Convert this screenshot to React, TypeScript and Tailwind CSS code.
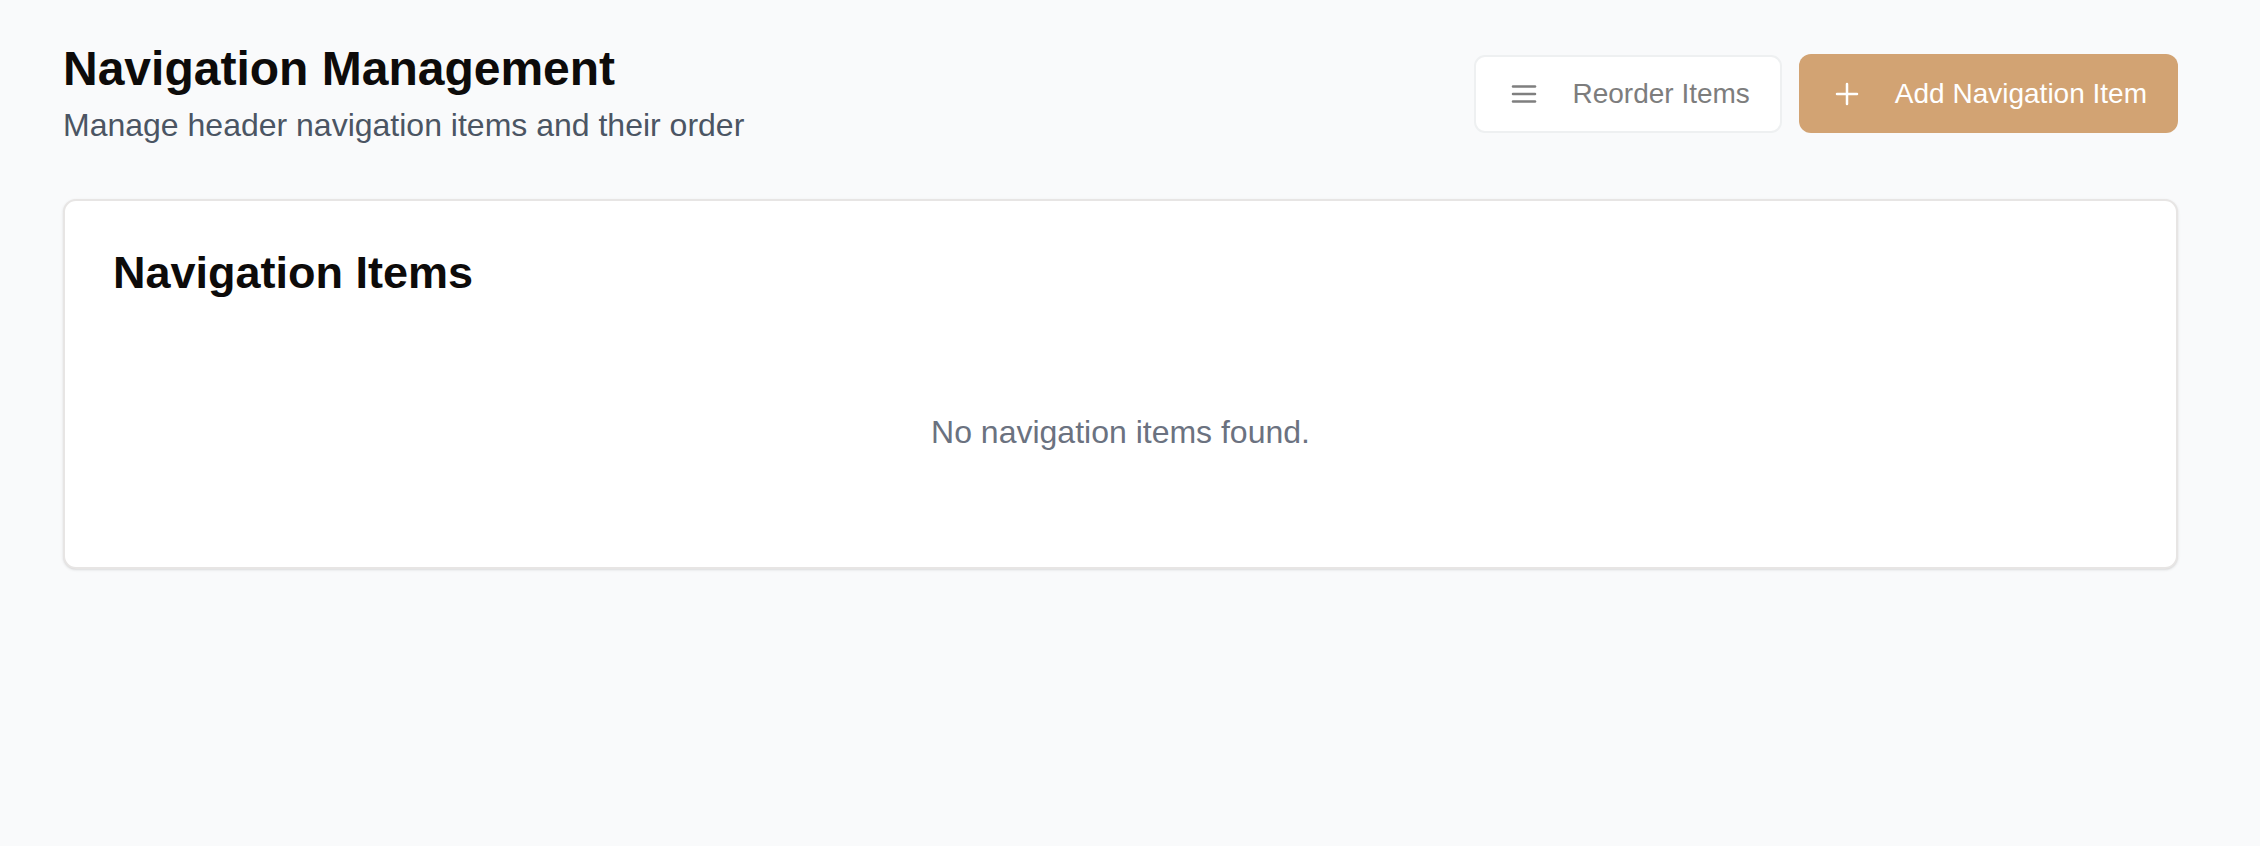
import React from 'react';

export default function App() {
  return (
    <div
      className="min-h-screen bg-[#f9fafb] pt-[40px] pl-[63px] pr-[82px]"
      style={{ fontFamily: '"Liberation Sans", Arial, sans-serif' }}
    >
      <div className="flex items-center justify-between">
        <div>
          <h1 className="text-[48px] leading-[57.6px] font-bold text-[#0d0b0a]">Navigation Management</h1>
          <p className="mt-[5px] text-[32px] leading-[44.8px] text-[#4b5563]">
            Manage header navigation items and their order
          </p>
        </div>
        <div className="flex items-center gap-[17px]">
          <button
            type="button"
            className="flex h-[78px] items-center gap-[35px] rounded-[11px] border-2 border-[#eef0f1] bg-white pl-[35px] pr-[30px] text-[28px] text-[#7d7d7d]"
          >
            <MenuIcon />
            <span>Reorder Items</span>
          </button>
          <button
            type="button"
            className="flex h-[79px] items-center gap-[36px] rounded-[12px] bg-[#d2a373] pl-[36px] pr-[31px] text-[28px] text-white"
          >
            <PlusIcon />
            <span>Add Navigation Item</span>
          </button>
        </div>
      </div>

      <div className="mt-[52px] rounded-[13px] border-2 border-[#e7e5e4] bg-white pt-[45px] pb-[48px] pl-[48px] pr-[48px] shadow-sm">
        <h2 className="mb-[46px] text-[45px] leading-[54px] font-bold text-[#0d0b0a]">Navigation Items</h2>
        <div className="py-[64px] text-center text-[32px] leading-[44.8px] text-[#6b7280]">
          No navigation items found.
        </div>
      </div>
    </div>
  );
}

function MenuIcon() {
  return (
    <svg width="26" height="24" viewBox="0 0 26 24" fill="none" stroke="#7f7f7f" strokeWidth="2.5" strokeLinecap="round">
      <line x1="2" y1="4.5" x2="24" y2="4.5" />
      <line x1="2" y1="12" x2="24" y2="12" />
      <line x1="2" y1="19.5" x2="24" y2="19.5" />
    </svg>
  );
}

function PlusIcon() {
  return (
    <svg width="24" height="24" viewBox="0 0 24 24" fill="none" stroke="white" strokeWidth="2.5" strokeLinecap="round">
      <line x1="12" y1="2" x2="12" y2="22" />
      <line x1="2" y1="12" x2="22" y2="12" />
    </svg>
  );
}
